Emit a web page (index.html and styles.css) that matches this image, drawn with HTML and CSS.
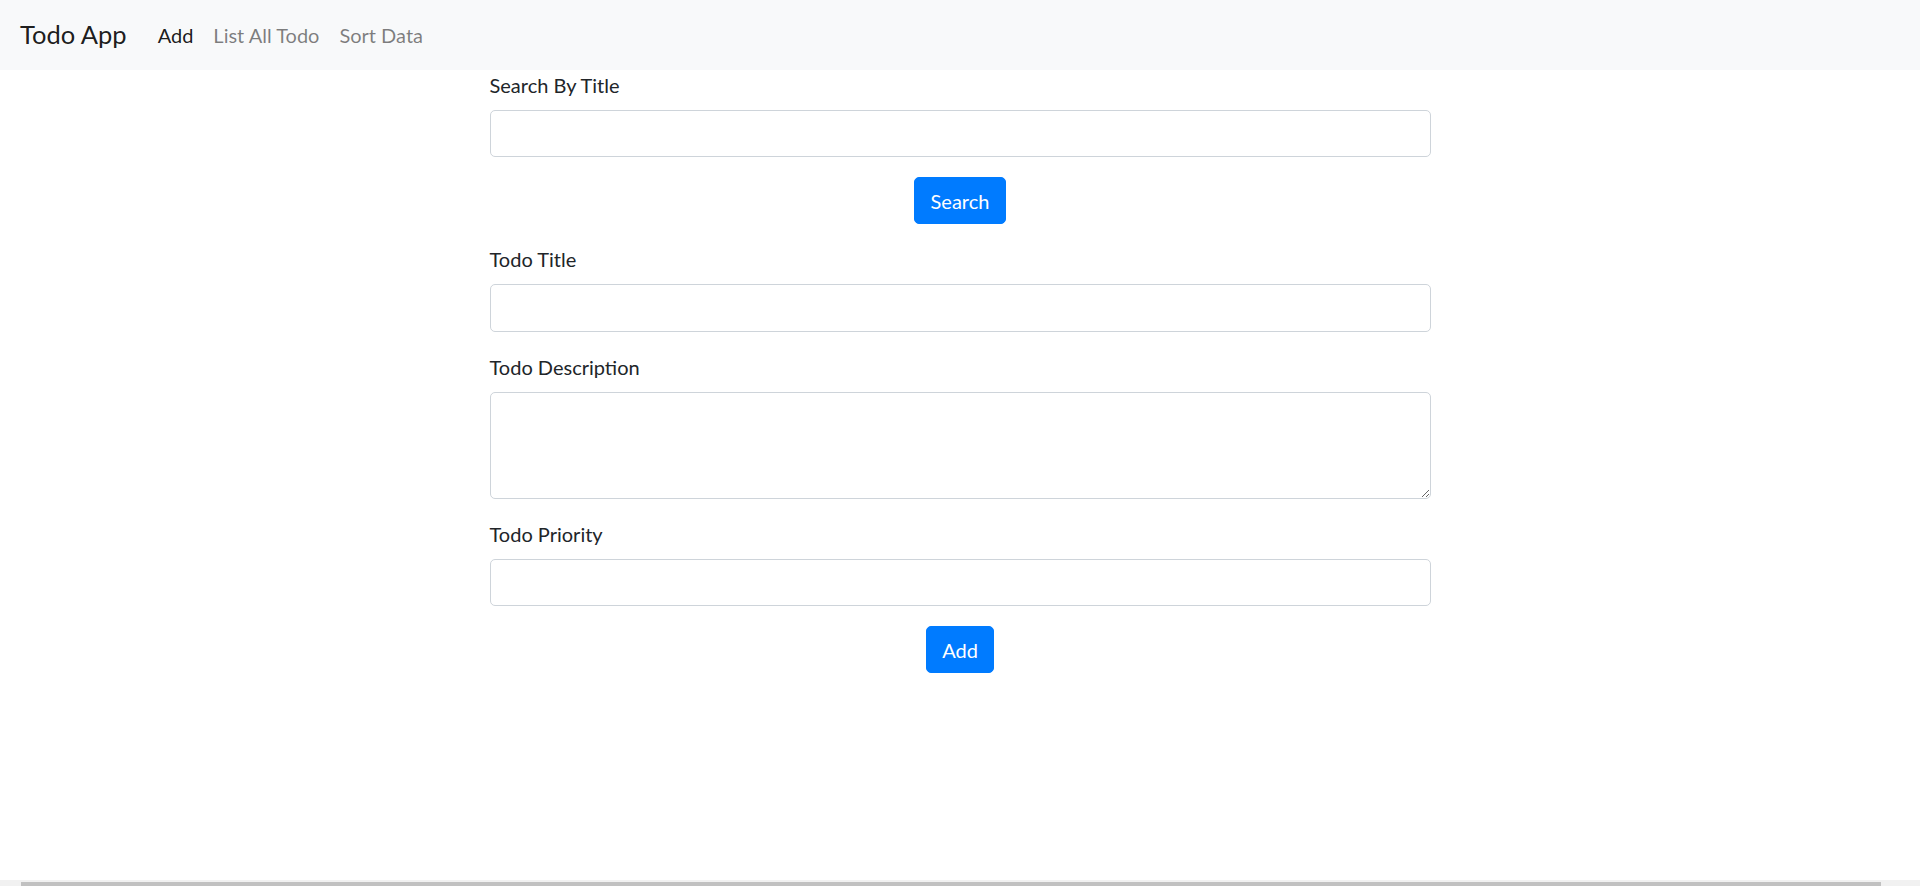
FILE: index.html
```html
<!DOCTYPE html>
<html lang="en">
<head>
<meta charset="utf-8">
<title>Todo App</title>
<link rel="stylesheet" href="styles.css">
</head>
<body>
<nav class="navbar">
  <a class="brand" href="#">Todo App</a>
  <ul class="nav">
    <li><a class="nav-link active" href="#">Add</a></li>
    <li><a class="nav-link" href="#">List All Todo</a></li>
    <li><a class="nav-link" href="#">Sort Data</a></li>
  </ul>
</nav>
<main class="form-wrap">
  <div class="form-group">
    <label class="label" for="search">Search By Title</label>
    <input class="form-control" id="search" type="text">
  </div>
  <div class="btn-row">
    <button class="btn" type="button">Search</button>
  </div>
  <div class="form-group">
    <label class="label" for="title">Todo Title</label>
    <input class="form-control" id="title" type="text">
  </div>
  <div class="form-group">
    <label class="label" for="desc">Todo Description</label>
    <textarea class="form-control textarea" id="desc" rows="3"></textarea>
  </div>
  <div class="form-group">
    <label class="label" for="prio">Todo Priority</label>
    <input class="form-control" id="prio" type="text">
  </div>
  <div class="btn-row">
    <button class="btn" type="button">Add</button>
  </div>
</main>
<div class="hscroll"><div class="hscroll-thumb"></div></div>
</body>
</html>
```
FILE: styles.css
```css
html, body {
  margin: 0;
  padding: 0;
  overflow: hidden;
  height: 100%;
}
body {
  font-family: Lato, "Noto Sans", "Liberation Sans", sans-serif;
  font-size: 20px;
  line-height: 1.5;
  color: #212529;
  background: #fff;
}
*, *::before, *::after { box-sizing: border-box; }

.navbar {
  display: flex;
  align-items: center;
  height: 69.5px;
  padding: 10px 20px;
  background: #f8f9fa;
}
.brand {
  font-size: 25.5px;
  line-height: 37.5px;
  padding: 6px 0;
  margin-right: 21px;
  color: rgba(0,0,0,.9);
  text-decoration: none;
}
.nav {
  display: flex;
  list-style: none;
  margin: 0;
  padding: 0;
}
.nav-link {
  display: block;
  padding: 10px 10px;
  color: rgba(0,0,0,.5);
  text-decoration: none;
}
.nav-link.active { color: rgba(0,0,0,.9); }

.form-wrap {
  width: 941px;
  margin: 0 auto;
}
.form-group { margin-bottom: 20px; }
.label {
  display: block;
  margin-bottom: 10px;
}
.form-control {
  display: block;
  width: 100%;
  height: 47.5px;
  padding: 7.5px 15px;
  font: inherit;
  color: #495057;
  background: #fff;
  border: 1px solid #ced4da;
  border-radius: 5px;
  outline: none;
}
.textarea {
  height: 107px;
  resize: vertical;
}
.btn-row {
  text-align: center;
  margin-bottom: 20px;
}
.btn {
  display: inline-block;
  font: inherit;
  padding: 7.5px 15.5px;
  color: #fff;
  background: #007bff;
  border: 1px solid #007bff;
  border-radius: 5px;
  cursor: pointer;
}

.hscroll {
  position: fixed;
  left: 0;
  right: 0;
  bottom: 0;
  height: 6px;
  background: #f1f1f1;
}
.hscroll-thumb {
  position: absolute;
  left: 21px;
  right: 39px;
  top: 2px;
  bottom: 0;
  background: #c1c1c1;
}
```
